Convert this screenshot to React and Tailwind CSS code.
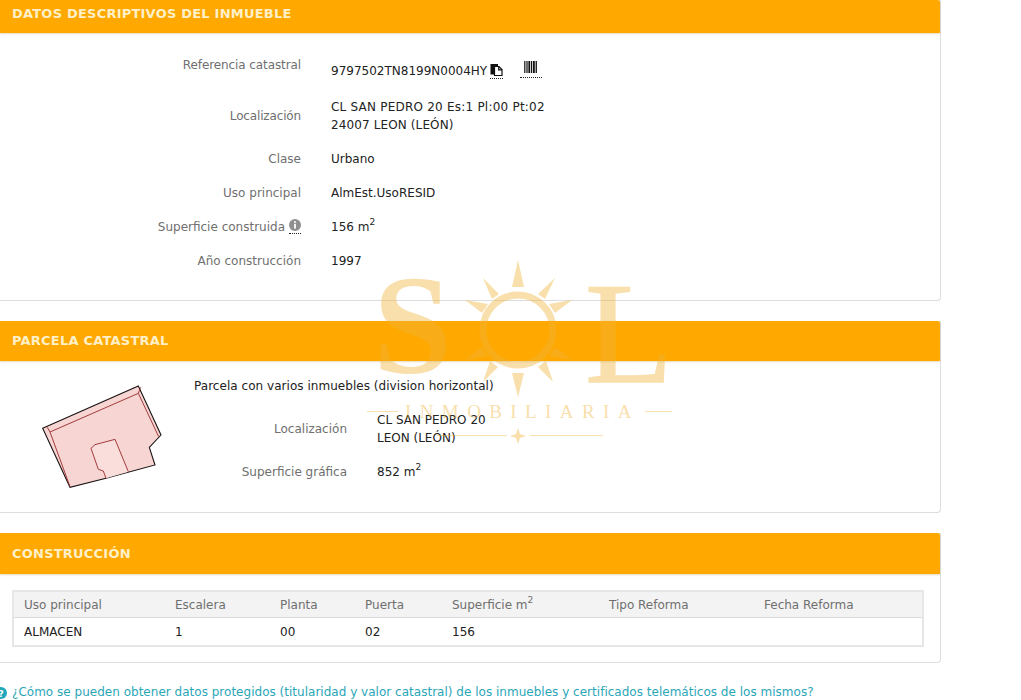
const font = { fontFamily: '"DejaVu Sans", sans-serif' };

function Header({ children, className }) {
  return (
    <div className={`flex items-center rounded-tr-[2px] bg-[#ffa800] pl-3 font-bold text-[13px] tracking-[0.22px] text-[#fff0c8] ${className}`}>
      {children}
    </div>
  );
}

function Row({ label, className, labelClass = "w-[301px]", children }) {
  return (
    <div className={`flex items-center ${className}`}>
      <div className={`${labelClass} shrink-0 text-right text-[#6f6f6f]`}>{label}</div>
      <div className="ml-[30px] text-[#222]">{children}</div>
    </div>
  );
}

function M2({ v }) {
  return (
    <span>
      {v} m<sup className="relative top-[-1px] align-super text-[9px] leading-none">2</sup>
    </span>
  );
}

function CopyIcon() {
  return (
    <span className="ml-[3px] inline-block border-b border-dotted border-[#222] pb-[2px] align-[-4px]">
      <svg width="13" height="13" viewBox="0 0 13 13" className="block">
        <path d="M0.5 1 H8 V3 H4 V11.5 H0.5 Z" fill="#111" />
        <path d="M4.5 3.5 H9 L12 6.5 V12.5 H4.5 Z" fill="#fff" stroke="#111" strokeWidth="1.2" />
        <path d="M8.7 3.5 V6.8 H12" fill="none" stroke="#111" strokeWidth="1.2" />
      </svg>
    </span>
  );
}

function BarcodeIcon() {
  return (
    <span className="ml-[17px] inline-block border-b border-dotted border-[#222] pb-[4px] pl-[4px] pr-[5px] align-[-3px]">
      <svg width="13" height="12" viewBox="0 0 13 12" className="block">
        <g fill="#111">
          <rect x="0.2" width="1.2" height="12" />
          <rect x="2.4" width="1.2" height="12" />
          <rect x="4.4" width="1.8" height="12" />
          <rect x="7" width="1.2" height="12" />
          <rect x="9" width="1.8" height="12" />
          <rect x="11.6" width="1.3" height="12" />
        </g>
      </svg>
    </span>
  );
}

function InfoIcon() {
  return (
    <span className="ml-[4px] inline-block border-b border-dotted border-[#222] pb-[2px] align-[-3px]">
      <svg width="12" height="12" viewBox="0 0 12 12" className="block">
        <circle cx="6" cy="6" r="6" fill="#8f8f8f" />
        <rect x="5.1" y="2.2" width="1.8" height="1.6" fill="#fff" />
        <rect x="5.1" y="4.8" width="1.8" height="4.8" fill="#fff" />
      </svg>
    </span>
  );
}

function Plot() {
  return (
    <svg width="160" height="130" viewBox="0 0 480 390" className="block shrink-0">
      <path d="M68 175 L355 48 L423 195 L388 232 L405 285 L258 325 L150 352 Z" fill="#f6d5d3" stroke="#1a1212" strokeWidth="3.2" strokeLinejoin="miter" />
      <path d="M82 172 L90 186 L355 70 L362 52 M90 186 L150 350 M355 70 L416 200" fill="none" stroke="#9c3030" strokeWidth="2.8" />
      <path d="M258 325 L250 303 L235 298 L213 235 L225 224 L285 208 L325 305" fill="#f9dedc" stroke="#9c3030" strokeWidth="2.8" strokeLinejoin="miter" />
    </svg>
  );
}

function Watermark() {
  const rays = [
    "M518 260 L524 287 L512 287 Z",
    "M518 397 L524 373 L512 373 Z",
    "M483 278 L499 294 L492 299 Z",
    "M555 278 L545 299 L538 294 Z",
    "M465 300 L488 304 L482 313 Z",
    "M572 300 L555 313 L549 304 Z",
    "M483 382 L490 361 L498 367 Z",
    "M553 382 L538 367 L546 361 Z",
    "M465 360 L482 347 L488 356 Z",
    "M572 360 L549 356 L555 347 Z",
  ];
  return (
    <svg width="1021" height="700" viewBox="0 0 1021 700" className="pointer-events-none absolute left-0 top-0">
      <g fill="#efb53a" opacity="0.42">
        <text x="373" y="373" fontFamily='"Liberation Serif", serif' fontWeight="700" fontSize="142">S</text>
        <text x="585" y="382" fontFamily='"Liberation Serif", serif' fontSize="144" stroke="#efb53a" strokeWidth="1.5">L</text>
        {rays.map((d) => (
          <path key={d} d={d} />
        ))}
        <circle cx="518" cy="330" r="35" fill="none" stroke="#efb53a" strokeWidth="7" />
        <text x="405" y="418" fontFamily='"Liberation Serif", serif' fontSize="19" letterSpacing="8.4">INMOBILIARIA</text>
        <rect x="367" y="411" width="31" height="1" />
        <rect x="645" y="411" width="27" height="1" />
        <rect x="437" y="435" width="70" height="1" />
        <rect x="530" y="435" width="73" height="1" />
        <path d="M518 428 L520 434 L526 436 L520 438 L518 444 L516 438 L510 436 L516 434 Z" />
      </g>
    </svg>
  );
}

const cols = "grid grid-cols-[151px_105px_85px_87px_157px_155px_1fr] items-center pl-[10px]";

export default function App() {
  return (
    <div className="relative h-[700px] w-[1021px] overflow-hidden bg-white text-[12px] leading-[18px]" style={font}>
      <div className="w-[941px]">
        <section className="h-[301px] rounded-br-[4px] border-b border-r border-[#dddddd]">
          <Header className="h-[33px] pb-[6px] shadow-[0_1px_2px_rgba(160,110,0,0.25)]">DATOS DESCRIPTIVOS DEL INMUEBLE</Header>
          <div className="pt-[16px]">
            <div className="flex h-[36px]">
              <div className="w-[301px] pt-[7px] text-right tracking-[-0.1px] text-[#6f6f6f]">Referencia catastral</div>
              <div className="ml-[30px] pt-[12px] whitespace-nowrap text-[#222]">
                9797502TN8199N0004HY
                <CopyIcon />
                <BarcodeIcon />
              </div>
            </div>
            <Row label={<span className="tracking-[-0.15px]">Localización</span>} className="mt-[9px] h-[44px]">
              <span className="tracking-[0.22px]">CL SAN PEDRO 20 Es:1 Pl:00 Pt:02</span>
              <br />
              <span className="tracking-[0.12px]">24007 LEON (LEÓN)</span>
            </Row>
            <Row label="Clase" className="mt-[4px] h-[34px]">Urbano</Row>
            <Row label="Uso principal" className="h-[34px]">AlmEst.UsoRESID</Row>
            <Row
              label={
                <span>
                  Superficie construida
                  <InfoIcon />
                </span>
              }
              className="h-[34px]"
            >
              <M2 v="156" />
            </Row>
            <Row label="Año construcción" className="h-[34px]">1997</Row>
          </div>
        </section>

        <section className="mt-[20px] h-[192px] rounded-br-[4px] border-b border-r border-[#dddddd]">
          <Header className="h-[40px] shadow-[0_1px_2px_rgba(160,110,0,0.25)]">PARCELA CATASTRAL</Header>
          <div className="flex">
            <div className="ml-[20px] mt-[9px] w-[174px] shrink-0">
              <Plot />
            </div>
            <div className="pt-[16px]">
              <div className="tracking-[0.04px] text-[#222]">Parcela con varios inmuebles (division horizontal)</div>
              <Row label="Localización" labelClass="w-[153px]" className="mt-[16px] h-[36px]">
                CL SAN PEDRO 20
                <br />
                LEON (LEÓN)
              </Row>
              <Row label="Superficie gráfica" labelClass="w-[153px]" className="mt-[7px] h-[36px]">
                <M2 v="852" />
              </Row>
            </div>
          </div>
        </section>

        <section className="mt-[20px] h-[130px] rounded-br-[4px] border-b border-r border-[#dddddd]">
          <Header className="h-[41px] shadow-[0_1px_2px_rgba(160,110,0,0.25)]">CONSTRUCCIÓN</Header>
          <div className="ml-[12px] mt-[16px] w-[912px] border-2 border-[#e6e6e6]">
            <div className={`${cols} h-[26px] border-b border-[#dcdcdc] bg-[#f3f3f3] text-[#6f6f6f]`}>
              <div>Uso principal</div>
              <div>Escalera</div>
              <div>Planta</div>
              <div>Puerta</div>
              <div>
                Superficie m<sup className="relative top-[-1px] align-super text-[9px] leading-none">2</sup>
              </div>
              <div>Tipo Reforma</div>
              <div>Fecha Reforma</div>
            </div>
            <div className={`${cols} h-[27px] text-[#222]`}>
              <div>ALMACEN</div>
              <div>1</div>
              <div>00</div>
              <div>02</div>
              <div>156</div>
              <div></div>
              <div></div>
            </div>
          </div>
        </section>

        <div className="mt-[20px] flex items-center whitespace-nowrap text-[#2aa6b8]">
          <svg width="12" height="12" viewBox="0 0 12 12" className="ml-[-5px] mr-[5px] shrink-0">
            <circle cx="6" cy="6" r="6" fill="#22a7bd" />
            <text x="6" y="9.5" textAnchor="middle" fontSize="9" fontWeight="700" fill="#fff">?</text>
          </svg>
          <span className="tracking-[0.015px] border-b border-dotted border-[#2aa6b8]">
            ¿Cómo se pueden obtener datos protegidos (titularidad y valor catastral) de los inmuebles y certificados telemáticos de los mismos?
          </span>
        </div>
      </div>
      <Watermark />
    </div>
  );
}
